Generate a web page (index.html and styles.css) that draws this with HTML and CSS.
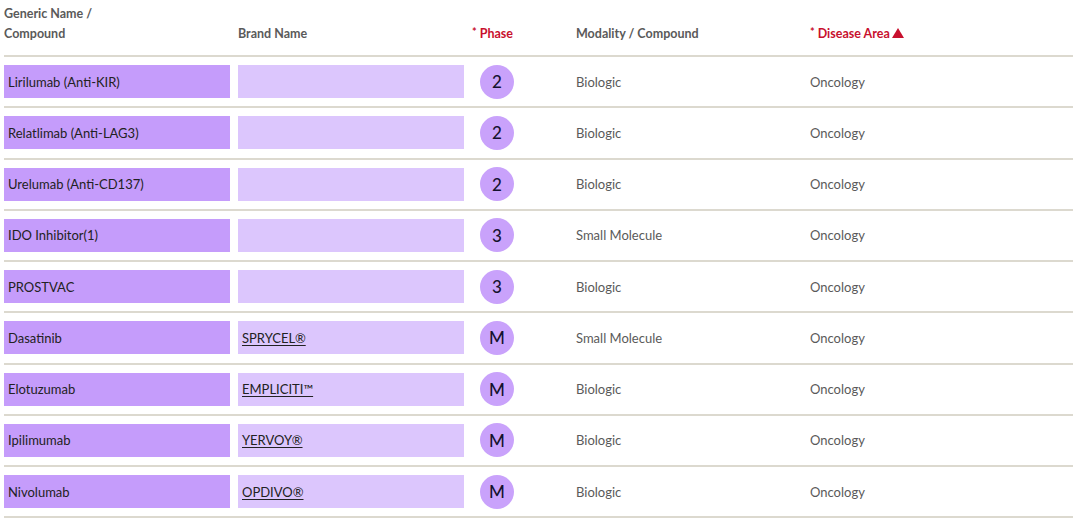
FILE: index.html
```html
<!DOCTYPE html>
<html>
<head>
<meta charset="utf-8">
<link rel="stylesheet" href="styles.css">
</head>
<body>
<div class="table">
  <div class="row head">
    <div class="th">Generic Name /<br>Compound</div>
    <div class="th">Brand Name</div>
    <div class="th red"><span class="ast">*</span> Phase</div>
    <div class="th">Modality / Compound</div>
    <div class="th red"><span class="ast">*</span> Disease Area<span class="tri"></span></div>
  </div>
  <div class="row">
    <div class="cell"><div class="box gen">Lirilumab (Anti-KIR)</div></div>
    <div class="cell"><div class="box brand"></div></div>
    <div class="cell phase"><span class="dot">2</span></div>
    <div class="cell txt">Biologic</div>
    <div class="cell txt">Oncology</div>
  </div>
  <div class="row">
    <div class="cell"><div class="box gen">Relatlimab (Anti-LAG3)</div></div>
    <div class="cell"><div class="box brand"></div></div>
    <div class="cell phase"><span class="dot">2</span></div>
    <div class="cell txt">Biologic</div>
    <div class="cell txt">Oncology</div>
  </div>
  <div class="row">
    <div class="cell"><div class="box gen">Urelumab (Anti-CD137)</div></div>
    <div class="cell"><div class="box brand"></div></div>
    <div class="cell phase"><span class="dot">2</span></div>
    <div class="cell txt">Biologic</div>
    <div class="cell txt">Oncology</div>
  </div>
  <div class="row">
    <div class="cell"><div class="box gen">IDO Inhibitor(1)</div></div>
    <div class="cell"><div class="box brand"></div></div>
    <div class="cell phase"><span class="dot">3</span></div>
    <div class="cell txt">Small Molecule</div>
    <div class="cell txt">Oncology</div>
  </div>
  <div class="row">
    <div class="cell"><div class="box gen">PROSTVAC</div></div>
    <div class="cell"><div class="box brand"></div></div>
    <div class="cell phase"><span class="dot">3</span></div>
    <div class="cell txt">Biologic</div>
    <div class="cell txt">Oncology</div>
  </div>
  <div class="row">
    <div class="cell"><div class="box gen">Dasatinib</div></div>
    <div class="cell"><div class="box brand"><a href="#">SPRYCEL®</a></div></div>
    <div class="cell phase"><span class="dot">M</span></div>
    <div class="cell txt">Small Molecule</div>
    <div class="cell txt">Oncology</div>
  </div>
  <div class="row">
    <div class="cell"><div class="box gen">Elotuzumab</div></div>
    <div class="cell"><div class="box brand"><a href="#">EMPLICITI™</a></div></div>
    <div class="cell phase"><span class="dot">M</span></div>
    <div class="cell txt">Biologic</div>
    <div class="cell txt">Oncology</div>
  </div>
  <div class="row">
    <div class="cell"><div class="box gen">Ipilimumab</div></div>
    <div class="cell"><div class="box brand"><a href="#">YERVOY®</a></div></div>
    <div class="cell phase"><span class="dot">M</span></div>
    <div class="cell txt">Biologic</div>
    <div class="cell txt">Oncology</div>
  </div>
  <div class="row">
    <div class="cell"><div class="box gen">Nivolumab</div></div>
    <div class="cell"><div class="box brand"><a href="#">OPDIVO®</a></div></div>
    <div class="cell phase"><span class="dot">M</span></div>
    <div class="cell txt">Biologic</div>
    <div class="cell txt">Oncology</div>
  </div>
</div>
</body>
</html>
```
FILE: styles.css
```css
html, body {
  margin: 0;
  padding: 0;
  background: #fff;
}
body {
  font-family: "Lato", "Noto Sans", sans-serif;
  font-size: 13px;
  color: #555;
  padding-left: 4px;
}
.table {
  width: 1069px;
}
.row {
  display: grid;
  grid-template-columns: 234px 234px 104px 234px 1fr;
  border-bottom: 2px solid #dcd9cf;
  height: 49.25px;
  align-items: center;
}
.row.head {
  height: 55px;
  align-items: end;
}
.th {
  font-weight: 700;
  color: #5a5a5a;
  font-size: 12.5px;
  line-height: 20px;
  padding-bottom: 11px;
}
.th.red {
  color: #c8102e;
}
.ast {
  font-size: 11px;
  position: relative;
  top: -2px;
}
.tri {
  display: inline-block;
  width: 0;
  height: 0;
  border-left: 6px solid transparent;
  border-right: 6px solid transparent;
  border-bottom: 10px solid #c8102e;
  margin-left: 2px;
  vertical-align: 0px;
}
.cell {
  padding-right: 8px;
}
.box {
  height: 33px;
  display: flex;
  align-items: center;
  padding-left: 4px;
  color: #222;
  font-size: 13px;
}
.box.gen {
  background: #c59cfb;
}
.box.brand {
  background: #dcc6fd;
}
.box.brand a {
  color: #222;
  text-decoration: underline;
  text-underline-offset: 2px;
}
.phase {
  padding-left: 8px;
}
.dot {
  width: 34px;
  height: 34px;
  border-radius: 50%;
  background: #c9a2fb;
  color: #15122e;
  display: flex;
  align-items: center;
  justify-content: center;
  font-size: 17px;
  font-weight: 500;
}
.txt {
  color: #5a5a5a;
  font-size: 13px;
}
```
